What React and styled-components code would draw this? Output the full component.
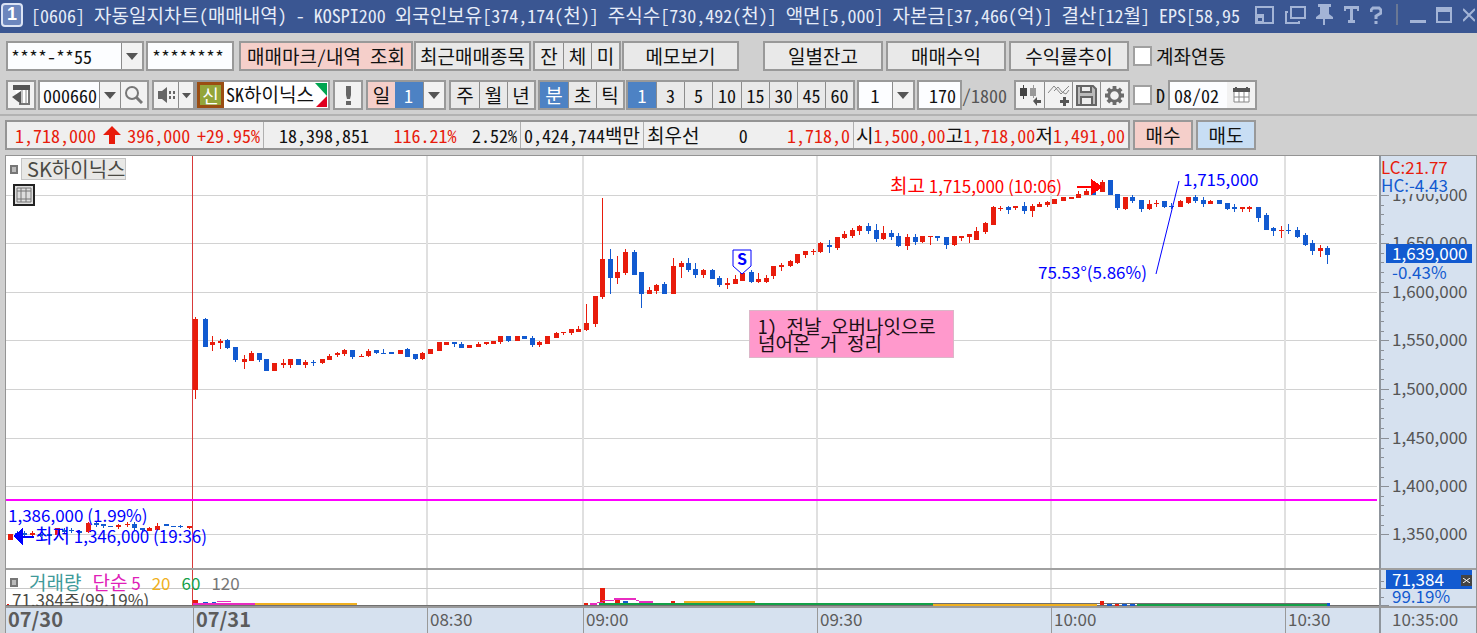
import React from "react";
import styled, { createGlobalStyle, css } from "styled-components";

const MONO = `"Noto Sans Mono CJK KR", "Noto Sans CJK KR", monospace`;
const LABEL = `"Noto Sans CJK KR", "Liberation Sans", sans-serif`;
const RED = "#e81c0c";
const BLUE = "#125ad0";
const INK = "#0000ff";
const LINE = "#8c8c8c";
const AXIS_BG = "#d6e1ef";

const GlobalStyle = createGlobalStyle`
  * { box-sizing: border-box; }
  body { margin: 0; background: #d0d0d0; font-family: ${MONO}; font-size: 18px; color: #111; }
  button, input, select { font: inherit; color: inherit; margin: 0; padding: 0; border: 0; border-radius: 0; background: none; }
`;

const Window = styled.main`
  display: flex;
  flex-direction: column;
  min-height: 100vh;
  overflow: hidden;
`;

/* Hangul is set one size larger than the digits beside it. */
const Hangul = styled.span`
  font-size: 19px;
`;
const T = ({ children }) => (
  <span>
    {String(children).split(/([가-힣]+)/).map((s, i) => (i % 2 ? <Hangul key={i}>{s}</Hangul> : s))}
  </span>
);

/* ---------- title bar ---------- */
const TitleBar = styled.header`
  display: flex;
  align-items: center;
  height: 33px;
  padding: 0 0 4px 1px;
  background: #3a5692;
  color: #e6ecf8;
`;
const Badge = styled.span`
  flex: none;
  width: 22px;
  height: 24px;
  border: 2px solid #dbe3f4;
  border-radius: 4px;
  background: #6c86bd;
  color: #fff;
  font: bold 18px/19px "Liberation Sans", sans-serif;
  text-align: center;
`;
const TitleText = styled.h1`
  flex: 1;
  min-width: 0;
  margin: 0 9px 0 8px;
  overflow: hidden;
  white-space: nowrap;
  font-size: 18px;
  font-weight: 400;
  line-height: 28px;
`;
const TitleTools = styled.div`
  flex: none;
  display: flex;
  align-items: center;
  color: #a3b4d6;
`;
const TitleButton = styled.button`
  display: flex;
  align-items: center;
  justify-content: center;
  width: ${(p) => p.$w}px;
  height: 26px;
`;
const TitleRule = styled.i`
  width: 2px;
  height: 21px;
  margin: 0 9px 0 14px;
  background: #6a7894;
`;

/* ---------- tool rows ---------- */
const Tools = styled.div`
  display: flex;
  flex-direction: column;
  gap: 9px;
  padding: 8px 5px 4px 6px;
  border-bottom: 2px solid #b2b2b2;
`;
const Row = styled.div`
  display: flex;
  align-items: center;
  white-space: nowrap;
`;
const Spacer = styled.i`
  flex: none;
  width: ${(p) => p.$w}px;
`;
const tone = {
  plain: css`background: #e9e9e9;`,
  light: css`background: #f2f2f2;`,
  pink: css`background: #f5cfca;`,
  sky: css`background: #c8def4;`,
  active: css`background: #4d82c4; color: #fff;`,
};
const Button = styled.button`
  flex: none;
  display: flex;
  align-items: center;
  justify-content: center;
  width: ${(p) => p.$w}px;
  height: 30px;
  border: 2px solid #999;
  line-height: 24px;
  ${(p) => tone[p.$tone || "plain"]}
`;
const Group = styled.div`
  flex: none;
  display: flex;
  height: 30px;
  border: 2px solid #999;
`;
const Segment = styled.button`
  flex: none;
  display: flex;
  align-items: center;
  justify-content: center;
  width: ${(p) => p.$w}px;
  line-height: 24px;
  ${(p) => tone[p.$tone || "plain"]}
  & + & { border-left: 1px solid ${LINE}; }
`;
const Field = styled.input`
  flex: none;
  width: ${(p) => p.$w}px;
  height: ${(p) => (p.$bare ? 26 : 30)}px;
  padding: 0 4px;
  border: ${(p) => (p.$bare ? "0" : "2px solid #999")};
  background: #fcfdff;
  text-align: ${(p) => p.$align || "left"};
`;
const SelectBox = styled.span`
  flex: none;
  display: grid;
  grid-template-columns: 1fr ${(p) => p.$arrow || 21}px;
  width: ${(p) => p.$w}px;
  height: ${(p) => (p.$bare ? 26 : 30)}px;
  border: ${(p) => (p.$bare ? "0" : "2px solid #999")};
  select {
    grid-area: 1 / 1 / 2 / 3;
    appearance: none;
    width: 100%;
    padding: 0 3px;
    background: #fcfdff;
    text-align: ${(p) => p.$align || "left"};
    padding-right: ${(p) => (p.$align ? 25 : 3)}px;
    ${(p) => p.$active && tone.active}
  }
  i {
    grid-area: 1 / 2;
    display: flex;
    align-items: center;
    justify-content: center;
    border-left: 1px solid ${LINE};
    background: #f2f2f2;
    pointer-events: none;
  }
  & + ${Segment} { border-left: 1px solid ${LINE}; }
`;
const CheckLabel = styled.label`
  display: flex;
  align-items: center;
  gap: 4px;
  line-height: 24px;
  input {
    appearance: none;
    width: 19px;
    height: 20px;
    border: 2px solid #a0a0a0;
    background: #fff;
  }
`;
const Stock = styled.div`
  flex: none;
  display: flex;
  align-items: stretch;
  width: 135px;
  height: 30px;
  border: 2px solid #999;
  background: #fff;
  line-height: 24px;
`;
const CreditTag = styled.b`
  flex: none;
  width: 27px;
  border: 3px solid #9a4d12;
  background: #93a53a;
  color: #fff;
  font-size: 18px;
  font-weight: 400;
  line-height: 20px;
  text-align: center;
`;
const StockName = styled.span`
  flex: 1;
  min-width: 0;
  padding-left: 2px;
`;
const Muted = styled.span`
  width: 52px;
  color: #555;
`;

/* ---------- quote strip ---------- */
const QuoteRow = styled.div`
  display: flex;
  gap: 3px;
  padding: 4px 5px 5px;
`;
const Quote = styled.dl`
  flex: none;
  display: flex;
  width: 1125px;
  height: 30px;
  margin: 0;
  border: 2px solid #949494;
  background: #efefef;
  line-height: 26px;
  white-space: nowrap;
`;
const QuoteCell = styled.div`
  flex: none;
  display: flex;
  justify-content: space-between;
  align-items: center;
  width: ${(p) => p.$w}px;
  padding: 0 3px 0 ${(p) => p.$pad || 3}px;
  & + & { border-left: 1px solid #b0b0b0; }
  dt, dd { margin: 0; }
`;
const Up = styled.dd`
  color: ${RED};
`;

/* ---------- chart ---------- */
const Chart = styled.section`
  display: grid;
  grid-template-columns: minmax(0, 1fr) 97px;
  margin: 0 0 0 5px;
  border: 1px solid #949494;
  border-width: 1px 1px 0 1px;
  background: #fff;
  font-family: ${LABEL};
  font-size: 17px;
`;
const Pane = styled.div`
  position: relative;
  height: ${(p) => p.$h}px;
  overflow: hidden;
  border-bottom: ${(p) => p.$rule || 0}px solid #a0a0a0;
`;
const AxisPane = styled(Pane)`
  border-left: 2px solid #8f959c;
  background: ${AXIS_BG};
`;
const Drawing = styled.svg`
  display: block;
  width: 100%;
  height: ${(p) => p.$h}px;
`;
const Note = styled.span`
  position: absolute;
  line-height: 18px;
  white-space: nowrap;
  color: ${(p) => p.$color || INK};
`;
const Legend = styled.div`
  position: absolute;
  top: 2px;
  left: 4px;
  display: flex;
  align-items: center;
  gap: 11px;
  line-height: 20px;
  white-space: nowrap;
`;
const Handle = styled.i`
  width: 8px;
  height: 9px;
  border: 2px solid #777;
  background: #bbb;
`;
const SeriesName = styled.span`
  margin-left: -8px;
  padding: 0 4px 0 5px;
  height: 22px;
  width: 105px;
  border: 1px solid #c4c4c4;
  background: #e8e8e6;
  color: #4a4a44;
  font: 20px/20px ${LABEL};
`;
const Term = styled.span`
  color: ${(p) => p.$color};
`;
const GridButton = styled.button`
  position: absolute;
  top: 28px;
  left: 7px;
  display: flex;
  align-items: center;
  justify-content: center;
  width: 22px;
  height: 22px;
  border: 2px solid #222;
  background: #ddd;
`;
const Memo = styled.p`
  position: absolute;
  width: 205px;
  height: 48px;
  margin: 0;
  padding: 6px 8px;
  border: 1px solid #dcb6c8;
  background: #ff99cc;
  color: #1a1016;
  font: 19px/17px ${MONO};
  white-space: nowrap;
`;
const AxisLabel = styled.span`
  position: absolute;
  left: 11px;
  line-height: 18px;
  color: #555;
`;
const AxisHead = styled.span`
  position: absolute;
  left: 0;
  top: ${(p) => p.$top}px;
  padding-right: 2px;
  line-height: 18px;
  background: ${AXIS_BG};
  color: ${(p) => p.$color};
`;
const AxisTag = styled.span`
  position: absolute;
  left: 5px;
  top: ${(p) => p.$top}px;
  width: 86px;
  height: 19px;
  padding-left: 6px;
  background: ${BLUE};
  color: #fff;
  line-height: 18px;
`;
const CloseDot = styled.button`
  position: absolute;
  top: 5px;
  right: 0;
  display: flex;
  align-items: center;
  justify-content: center;
  width: 11px;
  height: 11px;
  background: #444;
`;
const TimeAxis = styled.div`
  display: grid;
  grid-template-columns: 187fr 234fr 156fr 234fr 234fr 234fr 94fr;
  height: 28px;
  border-top: 2px solid #9a9a9a;
  background: ${AXIS_BG};
`;
const Time = styled.time`
  min-width: 0;
  padding-left: 2px;
  color: #5c5c5c;
  line-height: 22px;
  ${(p) => p.$bold && css`font-weight: 700; font-size: 20px;`}
  & + & { border-left: 1px solid #999; }
`;
const TimeNow = styled.time`
  padding-left: 11px;
  height: 28px;
  border-top: 2px solid #9a9a9a;
  border-left: 2px solid #8f959c;
  background: ${AXIS_BG};
  color: #5c5c5c;
  line-height: 22px;
`;

/* colour, centre x, body top, body bottom, wick top, wick bottom */
const CANDLES = `
R 10 534 540 534 540;B 17 533 535 531 537;B 24 533 535 531 536;R 32 533 535 531 536;B 40 534 536 533 537;B 49 534 536 534 536
R 57 528 535 528 537;B 64 530 532 528 533;B 71 530 531 528 533;B 79 531 533 530 535;R 88 523 532 522 533;B 96 523 525 521 527
B 103 524 526 524 528;B 110 526 527 526 527;R 118 525 527 524 529;R 127 524 525 522 527;B 134 524 528 522 530;B 142 528 530 528 531
R 149 528 531 527 531;R 157 526 530 523 530;B 166 524 526 524 526;B 173 526 527 526 527;B 180 526 527 525 528;R 189 526 528 526 529
R 195 319 390 317 399;B 205 319 347 318 347;R 212 342 345 336 351;R 220 341 343 339 349;B 227 340 348 339 349;B 235 347 360 347 362
R 244 359 362 355 369;R 251 353 361 351 361;B 259 353 360 353 362;B 266 359 371 359 371;R 274 363 371 363 371;R 283 363 365 359 368
R 290 359 365 359 368;B 298 359 365 359 365;R 305 362 365 360 368;B 313 362 363 360 366;R 322 359 363 359 364;R 329 356 360 354 360
R 337 353 355 352 357;R 344 350 354 349 356;B 352 350 357 350 359;R 361 356 357 354 357;R 368 351 356 349 357;B 376 350 353 350 354
B 383 353 354 349 354;B 391 352 354 352 354;R 400 350 354 350 354;B 407 349 357 348 357;B 415 354 359 354 360;R 422 353 359 352 360
R 430 349 354 349 354;R 439 342 351 342 351;R 446 342 345 342 345;B 454 342 344 342 347;B 461 344 348 342 348;R 469 345 348 345 348
R 478 344 347 342 347;R 486 342 344 342 345;R 493 341 344 341 344;R 500 336 342 336 344;B 508 336 341 336 342;R 517 336 341 336 341
B 524 336 339 336 339;B 532 338 345 336 347;R 539 342 345 341 347;R 547 336 344 336 344;R 556 333 338 332 338;R 563 332 333 332 335
R 571 329 333 329 335;R 578 329 332 326 332;R 586 323 330 304 331;R 595 296 324 296 327;R 602 259 297 198 299;B 610 259 278 249 294
R 617 272 278 256 284;R 625 252 273 249 275;B 634 252 275 250 275;B 641 272 294 272 308;R 649 290 294 287 294;R 656 285 291 284 294
B 664 284 294 282 294;R 673 266 294 258 294;R 681 263 267 261 278;B 688 263 270 258 272;B 695 269 275 263 278;R 703 270 275 269 278
B 712 270 279 269 279;B 719 278 285 276 287;R 727 283 285 278 289;R 735 279 284 275 284;R 742 273 281 273 281;B 751 272 282 270 283
R 758 279 282 273 283;R 766 278 282 275 283;R 773 266 276 266 279;R 781 265 267 263 271;R 790 261 266 260 267;R 797 254 263 254 264
R 805 251 255 251 258;R 813 251 252 249 255;R 820 243 252 242 253;B 829 245 247 240 253;R 837 237 248 237 250;R 844 234 238 231 239
R 852 230 236 228 238;R 859 226 231 225 235;B 868 226 231 223 234;B 876 230 239 224 242;R 883 233 239 226 240;B 891 233 237 230 240
B 898 236 246 233 247;R 907 237 246 234 250;B 915 237 242 234 245;R 922 236 242 236 243;R 930 236 237 236 245;B 937 236 238 236 241
B 946 237 245 237 249;R 954 236 245 236 246;R 961 236 238 236 241;R 969 234 237 234 243;R 976 231 240 227 240;R 985 223 232 222 234
R 993 207 225 206 225;R 1000 208 209 206 211;B 1008 207 210 206 214;R 1015 206 208 206 210;B 1024 206 211 202 214;R 1032 206 211 204 217
R 1039 204 207 202 207;R 1047 202 205 201 207;R 1054 199 204 199 204;R 1063 197 201 197 201;R 1071 197 199 197 199;R 1078 194 198 191 198
R 1086 191 195 189 195;B 1093 188 195 188 195;R 1102 182 192 180 192;B 1110 180 195 180 195;B 1117 194 208 194 210;R 1125 197 209 197 210
B 1132 197 201 195 203;B 1141 200 209 200 212;R 1149 204 209 200 210;R 1156 203 204 200 207;B 1164 201 207 201 208;B 1171 206 207 203 209
R 1180 201 207 200 207;R 1188 197 203 197 204;B 1195 197 201 195 203;B 1203 200 204 197 207;R 1210 201 204 200 204;B 1219 200 204 200 204
B 1227 203 209 203 210;B 1234 207 209 204 212;R 1242 207 209 207 212;R 1249 207 209 206 212;B 1258 207 218 207 222;B 1266 215 230 213 230
B 1273 228 231 227 236;R 1281 230 231 226 238;B 1288 230 231 224 234;B 1297 230 237 227 238;B 1305 235 245 233 246;B 1312 243 251 240 255
R 1320 248 251 245 257;B 1327 248 255 246 264`
  .trim()
  .split(/[;\n]/)
  .map((s) => {
    const [c, ...n] = s.split(" ");
    return [c === "R" ? RED : BLUE, ...n.map(Number)];
  });

const PRICES = [
  ["1,700,000", 195], ["1,650,000", 243], ["1,600,000", 292], ["1,550,000", 340],
  ["1,500,000", 389], ["1,450,000", 438], ["1,400,000", 486], ["1,350,000", 534],
];
const HOURS = [427, 583, 817, 1051, 1285];

/* colour, x, y, width, height */
const VOLUME = [
  ["#c8c8c8", 6, 587, 1371, 1], ["#707070", 6, 604, 1373, 1],
  [RED, 7, 603, 2, 1], [RED, 193, 599, 5, 4], [BLUE, 203, 601, 5, 1], [BLUE, 212, 601, 4, 1],
  ["#e82cc0", 217, 600, 14, 1], [BLUE, 218, 602, 4, 1], [BLUE, 226, 602, 4, 1],
  ["#e82cc0", 193, 602, 62, 2], ["#f0b020", 255, 602, 102, 2],
  [RED, 584, 602, 4, 2], ["#e82cc0", 590, 602, 7, 2], [RED, 600, 587, 5, 15], [RED, 615, 598, 5, 4],
  [BLUE, 623, 600, 5, 2], [RED, 671, 600, 4, 2], ["#e82cc0", 597, 601, 6, 1], ["#e82cc0", 602, 599, 12, 1],
  ["#e82cc0", 614, 597, 22, 2], ["#e82cc0", 636, 599, 3, 1], ["#e82cc0", 639, 600, 14, 2],
  ["#f0b020", 684, 600, 71, 2], ["#14a048", 599, 602, 334, 2], ["#707070", 933, 602, 397, 1],
  ["#f0b020", 933, 603, 164, 2], [RED, 1100, 600, 4, 4], [BLUE, 1107, 603, 5, 2], [RED, 1115, 603, 4, 2],
  [BLUE, 1122, 603, 5, 2], [BLUE, 1130, 603, 5, 2], ["#14a048", 1137, 603, 190, 2], [BLUE, 1327, 602, 3, 3],
];

const atX = (x) => `${((x - 6) / 1373) * 100}%`;

const Caret = ({ size = 12 }) => (
  <svg width={size} height="7" viewBox="0 0 12 7"><path d="M0 0h12L6 7z" fill="#555" /></svg>
);

function Select({ label, value, ...rest }) {
  return (
    <SelectBox {...rest}>
      <select aria-label={label} defaultValue={value}><option>{value}</option></select>
      <i><Caret /></i>
    </SelectBox>
  );
}

function Segments({ items, widths, active }) {
  return (
    <Group>
      {items.map((t, i) => (
        <Segment key={t} $w={widths[i]} $tone={t === active ? "active" : "plain"}><T>{t}</T></Segment>
      ))}
    </Group>
  );
}

function Title() {
  return (
    <TitleBar>
      <Badge>1</Badge>
      <TitleText>
        <T>[0606] 자동일지차트(매매내역) - KOSPI200 외국인보유[374,174(천)] 주식수[730,492(천)] 액면[5,000] 자본금[37,466(억)] 결산[12월] EPS[58,95</T>
      </TitleText>
      <TitleTools>
        <TitleButton $w={19} aria-label="도킹">
          <svg width="19" height="18" viewBox="0 0 19 18"><path d="M1 1h17v16H1z" fill="none" stroke="currentColor" strokeWidth="2" /><path d="M1 8h8v9H1z" fill="currentColor" /><path d="M3 12h4v3H3z" fill="#3a5692" /></svg>
        </TitleButton>
        <TitleButton $w={42} aria-label="창 복제">
          <svg width="21" height="18" viewBox="0 0 21 18" fill="none" stroke="currentColor" strokeWidth="2"><path d="M6 1h14v11H6zM3 6H1v11h13v-2" /></svg>
        </TitleButton>
        <TitleButton $w={17} aria-label="고정">
          <svg width="17" height="21" viewBox="0 0 17 21" fill="currentColor"><path d="M2 0h13v3h-2v7l4 3v2H0v-2l4-3V3H2zM7 15h2v6H7z" /></svg>
        </TitleButton>
        <TitleButton $w={36} aria-label="글꼴">
          <svg width="15" height="17" viewBox="0 0 15 17" fill="currentColor"><path d="M0 0h15v5h-2V3H9v11h2v3H4v-3h2V3H2v2H0z" /></svg>
        </TitleButton>
        <TitleButton $w={13} aria-label="도움말">
          <svg width="12" height="18" viewBox="0 0 12 18" fill="none" stroke="currentColor" strokeWidth="3"><path d="M1 6V4l2-2h6l2 2v3L6 10v3M6 15v3" /></svg>
        </TitleButton>
        <TitleRule />
        <TitleButton $w={21} aria-label="최소화">
          <svg width="16" height="18" viewBox="0 0 16 18"><path d="M0 14h16v3H0z" fill="currentColor" /></svg>
        </TitleButton>
        <TitleButton $w={32} aria-label="최대화">
          <svg width="16" height="16" viewBox="0 0 16 16"><path d="M0 0h16v16H0zM2 5v9h12V5z" fill="currentColor" fillRule="evenodd" /></svg>
        </TitleButton>
        <TitleButton $w={17} aria-label="닫기">
          <svg width="12" height="14" viewBox="0 0 12 14"><path d="M0 1l12 12M12 1L0 13" stroke="currentColor" strokeWidth="2" /></svg>
        </TitleButton>
      </TitleTools>
    </TitleBar>
  );
}

function ToolRows() {
  return (
    <Tools>
      <Row>
        <Select label="계좌번호" value="****-**55" $w={138} />
        <Spacer $w={2} />
        <Field aria-label="비밀번호" defaultValue="********" $w={88} />
        <Spacer $w={5} />
        <Button $w={174} $tone="pink"><T>매매마크/내역 조회</T></Button>
        <Spacer $w={1} />
        <Button $w={117}><T>최근매매종목</T></Button>
        <Spacer $w={2} />
        <Segments items={["잔", "체", "미"]} widths={[28, 28, 28]} />
        <Spacer $w={1} />
        <Button $w={117}><T>메모보기</T></Button>
        <Spacer $w={24} />
        <Button $w={120}><T>일별잔고</T></Button>
        <Spacer $w={3} />
        <Button $w={120}><T>매매수익</T></Button>
        <Spacer $w={3} />
        <Button $w={120}><T>수익률추이</T></Button>
        <Spacer $w={4} />
        <CheckLabel><input type="checkbox" /><T>계좌연동</T></CheckLabel>
      </Row>
      <Row>
        <Button $w={30} $tone="light" aria-label="종목목록">
          <svg width="18" height="20" viewBox="0 0 18 20"><path d="M2 1h15v18H7" fill="#fff" stroke="#777" strokeWidth="2" /><path d="M1 0h17v5H1z" fill="#555" /><path d="M10 5v13M14 5v13" stroke="#888" /><path d="M0 12l9-6v13z" fill="#555" /></svg>
        </Button>
        <Spacer $w={2} />
        <Group>
          <Select label="종목코드" value="000660" $w={80} $bare />
          <Segment $w={27} $tone="light" aria-label="검색">
            <svg width="18" height="18" viewBox="0 0 18 18" fill="none" stroke="#777"><circle cx="7" cy="7" r="6" strokeWidth="2" /><path d="M11 11l6 6" strokeWidth="3" /></svg>
          </Segment>
        </Group>
        <Spacer $w={3} />
        <Group>
          <Segment $w={24} $tone="light" aria-label="소리">
            <svg width="17" height="16" viewBox="0 0 17 16" fill="#666"><path d="M0 4h4l5-4v16l-5-4H0zM11 4h2v3h-2zM11 9h2v3h-2zM15 4h2v3h-2zM15 9h2v3h-2z" /></svg>
          </Segment>
          <Segment $w={15} $tone="light" aria-label="소리 설정"><Caret size={9} /></Segment>
        </Group>
        <Stock>
          <CreditTag>신</CreditTag>
          <StockName><T>SK하이닉스</T></StockName>
          <svg width="13" height="26" viewBox="0 0 13 26"><path d="M0 1h12v13z" fill="#00a550" /><path d="M12 14v11H1z" fill="#e00020" /></svg>
        </Stock>
        <Spacer $w={3} />
        <Button $w={30} $tone="light" aria-label="알림">
          <svg width="5" height="19" viewBox="0 0 5 19" fill="#666"><path d="M0 0h5v9l-1 4H1L0 9zM0 15h5v4H0z" /></svg>
        </Button>
        <Spacer $w={3} />
        <Group>
          <Segment $w={27} $tone="pink"><T>일</T></Segment>
          <Select label="일 주기" value="1" $w={49} $bare $active $align="center" />
        </Group>
        <Spacer $w={3} />
        <Segments items={["주", "월", "년"]} widths={[28, 28, 27]} />
        <Spacer $w={2} />
        <Segments items={["분", "초", "틱"]} widths={[28, 28, 27]} active="분" />
        <Spacer $w={1} />
        <Segments items={["1", "3", "5", "10", "15", "30", "45", "60"]} widths={[28, 28, 28, 29, 28, 28, 28, 28]} active="1" />
        <Spacer $w={2} />
        <Select label="분 주기" value="1" $w={58} $align="center" />
        <Spacer $w={2} />
        <Field aria-label="표시 개수" defaultValue="170" $w={45} $align="right" />
        <Muted>/1800</Muted>
        <Group>
          <Segment $w={28} $tone="light" aria-label="봉 추가">
            <svg width="22" height="22" viewBox="0 0 22 22"><path d="M1 4h7v8H1zM4 1h1v14H4z" fill="#444" /><path d="M11 4h6v8h-6zM14 1h1v13h-1z" fill="#999" /><path d="M14 17l4-4v3h4v3h-4v3z" fill="#555" /></svg>
          </Segment>
          <Segment $w={28} $tone="light" aria-label="지표 추가">
            <svg width="22" height="22" viewBox="0 0 22 22"><path d="M0 9l6-7 7 8 8-8M6 7l4-4 4 5 4 2 3-4" fill="none" stroke="#888" /><path d="M15 13h3v3h3v3h-3v3h-3v-3h-3v-3h3z" fill="#555" /></svg>
          </Segment>
          <Segment $w={28} $tone="light" aria-label="저장">
            <svg width="21" height="21" viewBox="0 0 21 21" fill="none" stroke="#666" strokeWidth="2"><path d="M1 1h16l3 3v16H1z" fill="#bbb" /><path d="M5 1h10v6H5zM5 12h11v8H5z" fill="#eee" /></svg>
          </Segment>
          <Segment $w={28} $tone="light" aria-label="설정">
            <svg width="19" height="19" viewBox="-10 -10 20 20" fill="none" stroke="#6c6c6c"><circle r="6" strokeWidth="3" /><path d="M0-10v4M0 6v4M-10 0h4M6 0h4M-7-7l3 3M4 4l3 3M-7 7l3-3M4-4l3-3" strokeWidth="4" /></svg>
          </Segment>
        </Group>
        <Spacer $w={3} />
        <CheckLabel><input type="checkbox" />D</CheckLabel>
        <Spacer $w={3} />
        <Group>
          <Field aria-label="날짜" defaultValue="08/02" $w={57} $bare />
          <Segment as="button" $w={28} $tone="light" aria-label="달력">
            <svg width="17" height="16" viewBox="0 0 17 16"><path d="M0 1h17v4H0zM2 0h2v2H2zM13 0h2v2h-2z" fill="#555" /><path d="M1 5v10h15V5M6 5v10M11 5v10M1 10h15" fill="#fff" stroke="#888" /></svg>
          </Segment>
        </Group>
      </Row>
    </Tools>
  );
}

function QuoteStrip() {
  return (
    <QuoteRow>
      <Quote>
        <QuoteCell $w={256} $pad={8}>
          <Up>1,718,000</Up>
          <svg width="18" height="18" viewBox="0 0 18 18"><path d="M9 0l9 9h-6v9H6V9H0z" fill={RED} /></svg>
          <Up>396,000</Up>
          <Up>+29.95%</Up>
        </QuoteCell>
        <QuoteCell $w={257} $pad={15}><dd>18,398,851</dd><Up>&nbsp;116.21%</Up><dd>2.52%</dd></QuoteCell>
        <QuoteCell $w={123}><dd><T>0,424,744백만</T></dd></QuoteCell>
        <QuoteCell $w={210}><dt><T>최우선</T></dt><dd>0</dd><Up>1,718,0</Up></QuoteCell>
        <QuoteCell $w={275} $pad={2}>
          <dt><T>시</T></dt><Up>1,500,00</Up><dt><T>고</T></dt><Up>1,718,00</Up><dt><T>저</T></dt><Up>1,491,00</Up>
        </QuoteCell>
      </Quote>
      <Button $w={60} $tone="pink"><T>매수</T></Button>
      <Button $w={60} $tone="sky"><T>매도</T></Button>
    </QuoteRow>
  );
}

function PricePane() {
  return (
    <Pane $h={414} $rule={2}>
      <Drawing $h={412} viewBox="6 156 1373 412" preserveAspectRatio="none" shapeRendering="crispEdges">
        {PRICES.map(([p, y]) => <rect key={p} x="6" y={y} width="1371" height="1" fill="#d2d2d2" />)}
        {HOURS.map((x) => <rect key={x} x={x - 1} y="156" width="2" height="412" fill="#e0e0e0" />)}
        <rect x="192" y="156" width="1" height="412" fill="#d83a3a" />
        <rect x="6" y="499" width="1371" height="2" fill="#ff00ff" />
        {CANDLES.map(([c, x, bt, bb, wt, wb]) => (
          <g key={x} fill={c}>
            <rect x={x - 2} y={bt} width="5" height={bb - bt} />
            <rect x={x} y={wt} width="1" height={wb - wt} />
          </g>
        ))}
        <path d="M1179 181L1156 274" stroke={INK} fill="none" shapeRendering="auto" />
        <path d="M1077 186h14v-7l12 8-12 8v-7h-14z" fill="#ff0000" />
        <path d="M34 536H23v-8l-10 8 10 9v-7h11z" fill={INK} />
      </Drawing>
      <Legend><Handle /><SeriesName>SK하이닉스</SeriesName></Legend>
      <GridButton aria-label="데이터 표">
        <svg width="16" height="16" viewBox="0 0 16 16" fill="none" stroke="#777"><path d="M1 1h14v14H1zM1 4h14M1 12h14M5 1v14M10 1v14" /></svg>
      </GridButton>
      <Note $color="#ff0000" style={{ left: atX(890), top: 20 }}><T>최고 1,715,000 (10:06)</T></Note>
      <Note style={{ left: atX(1183), top: 14 }}>1,715,000</Note>
      <Note style={{ left: atX(1038), top: 107 }}>75.53°(5.86%)</Note>
      <Note style={{ left: atX(8), top: 350 }}>1,386,000 (1.99%)</Note>
      <Note style={{ left: atX(35), top: 370 }}><T>최저 1,346,000 (19:36)</T></Note>
      <Note style={{ left: atX(732), top: 93 }}>
        <svg width="20" height="26" viewBox="0 0 20 26">
          <path d="M1 1h18v16l-9 8-9-8z" fill="#fff" stroke={INK} />
          <text x="10" y="16" textAnchor="middle" fontSize="16" fontWeight="700" fill={INK}>S</text>
        </svg>
      </Note>
      <Memo style={{ left: atX(749), top: 154 }}>1) 전날 오버나잇으로<br />넘어온 거 정리</Memo>
    </Pane>
  );
}

function PriceAxis() {
  return (
    <AxisPane $h={414} $rule={2}>
      <Drawing $h={412} viewBox="1381 156 95 412" preserveAspectRatio="none" fill="#8a8f96">
        {PRICES.map(([p, y]) => <rect key={p} x="1381" y={y} width="8" height="1" />)}
        {PRICES.slice(0, 7).map(([p, y]) =>
          [10, 19, 29, 39].map((d) => <rect key={p + d} x="1381" y={y + d} width="3" height="1" />)
        )}
      </Drawing>
      {PRICES.map(([p, y]) => <AxisLabel key={p} style={{ top: y - 166 }}>{p}</AxisLabel>)}
      <AxisHead $top={2} $color={RED}>LC:21.77</AxisHead>
      <AxisHead $top={20} $color={BLUE}>HC:-4.43</AxisHead>
      <AxisTag $top={88}>1,639,000</AxisTag>
      <Note $color={BLUE} style={{ left: 11, top: 107 }}>-0.43%</Note>
    </AxisPane>
  );
}

function VolumePane() {
  return (
    <Pane $h={36}>
      <Drawing $h={36} viewBox="6 569 1373 36" preserveAspectRatio="none" shapeRendering="crispEdges">
        {HOURS.map((x) => <rect key={x} x={x - 1} y="569" width="2" height="36" fill="#e0e0e0" />)}
        {VOLUME.map(([c, x, y, w, h]) => <rect key={`${x}-${y}-${w}`} x={x} y={y} width={w} height={h} fill={c} />)}
        <rect x="192" y="569" width="1" height="36" fill="#d83a3a" />
      </Drawing>
      <Legend>
        <Handle />
        <Term $color="#3f9a9a"><T>거래량</T></Term>
        <Term $color="#e020b8"><T>단순 5</T></Term>
        <Term $color="#f0b020">20</Term>
        <Term $color="#14a048">60</Term>
        <Term $color="#777">120</Term>
      </Legend>
      <Note $color="#4a4a44" style={{ left: atX(12), top: 21 }}>71,384주(99.19%)</Note>
    </Pane>
  );
}

function VolumeAxis() {
  return (
    <AxisPane $h={36}>
      <Drawing $h={36} viewBox="1381 569 95 36" preserveAspectRatio="none" fill="#8a8f96">
        <rect x="1381" y="580" width="3" height="1" />
        <rect x="1381" y="587" width="8" height="1" />
        <rect x="1381" y="596" width="3" height="1" />
        <rect x="1381" y="604" width="8" height="1" />
      </Drawing>
      <AxisTag $top={0}>71,384
        <CloseDot aria-label="지표 닫기">
          <svg width="7" height="5" viewBox="0 0 7 5"><path d="M0 0l7 5M7 0L0 5" stroke="#fff" /></svg>
        </CloseDot>
      </AxisTag>
      <Note $color={BLUE} style={{ left: 11, top: 17 }}>99.19%</Note>
    </AxisPane>
  );
}

export default function App() {
  return (
    <Window>
      <GlobalStyle />
      <Title />
      <ToolRows />
      <QuoteStrip />
      <Chart>
        <PricePane />
        <PriceAxis />
        <VolumePane />
        <VolumeAxis />
        <TimeAxis>
          <Time $bold>07/30</Time>
          <Time $bold>07/31</Time>
          <Time>08:30</Time>
          <Time>09:00</Time>
          <Time>09:30</Time>
          <Time>10:00</Time>
          <Time>10:30</Time>
        </TimeAxis>
        <TimeNow>10:35:00</TimeNow>
      </Chart>
    </Window>
  );
}
